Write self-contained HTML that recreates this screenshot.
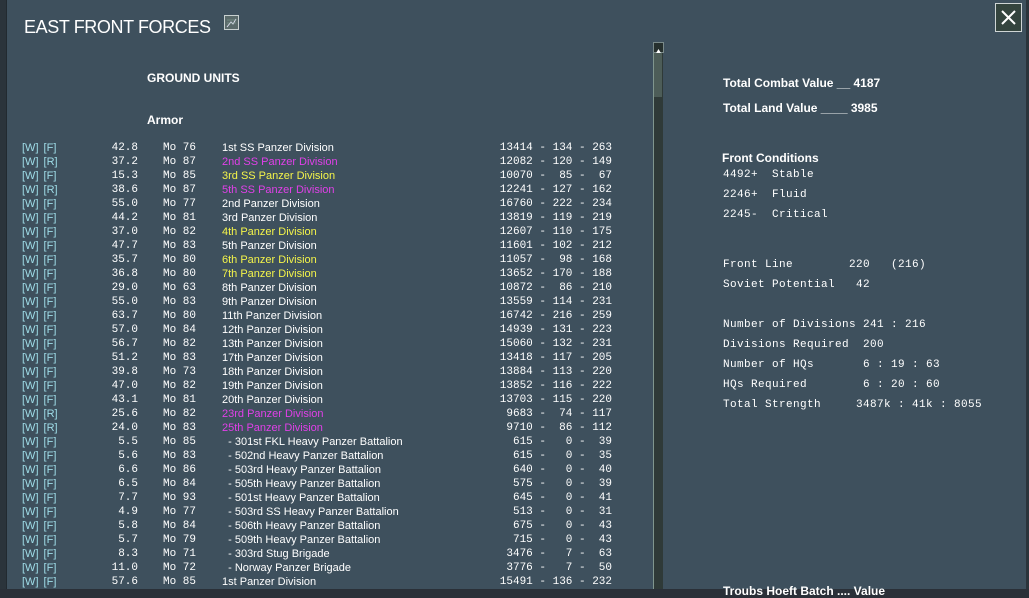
<!DOCTYPE html>
<html><head><meta charset="utf-8"><style>
html,body{margin:0;width:1029px;height:589px;overflow:hidden;background:#2a3038;font-family:"Liberation Sans",sans-serif;}
#win{position:absolute;left:0;top:0;width:1029px;height:589px;background:#3e505d;}
#edgeL{position:absolute;left:0;top:0;width:6px;height:589px;background:#2b343b;border-right:1px solid #222a30}
#edgeR{position:absolute;right:0;top:0;width:3px;height:589px;background:#2b343b}
.t{position:absolute;color:#fff;white-space:pre;}
h1{position:absolute;left:24px;top:17px;margin:0;font-size:18px;font-weight:normal;color:#fff;letter-spacing:-0.4px;}
.r{position:absolute;left:0;height:14px;line-height:14px;font-size:11px;white-space:pre;width:650px;}
.r span{position:absolute;top:0}
.wf{left:22px;color:#9fdde8;font-family:"Liberation Sans",sans-serif;word-spacing:2px}
.v{right:512px;color:#fff;font-family:"Liberation Mono",monospace;text-align:right}
.mo{left:163px;color:#fff;font-family:"Liberation Mono",monospace;}
.n{left:222px;color:#fff;}
.m .n{color:#e040e8}.y .n{color:#f4f44a}
.s{right:38px;color:#fff;font-family:"Liberation Mono",monospace;text-align:right}
.mono{font-family:"Liberation Mono",monospace;font-size:11px;color:#fff;position:absolute;white-space:pre;letter-spacing:0.4px}
</style></head><body>
<div id="win">
<div id="edgeL"></div><div id="edgeR"></div>
<h1>EAST FRONT FORCES</h1>
<div style="position:absolute;left:224px;top:15px;width:13px;height:13px;border:1px solid #c8d0d0;background:#5a6a6a"><svg width="13" height="13"><path d="M2 11 L6 6 L8 8 L11 3" stroke="#dde" fill="none"/><path d="M2 4h9M2 7h9" stroke="#8a9" stroke-width=".6"/></svg></div>
<div style="position:absolute;left:995px;top:3px;width:27px;height:29px;border:1px solid #cfd5d5;background:#34443e;box-sizing:border-box"><svg width="25" height="27"><path d="M6 7 L19 20 M19 7 L6 20" stroke="#fff" stroke-width="2"/></svg></div>
<div class="t" style="left:147px;top:71px;font-size:12px;font-weight:bold">GROUND UNITS</div>
<div class="t" style="left:147px;top:113px;font-size:12px;font-weight:bold">Armor</div>
<div style="position:absolute;left:653px;top:42px;width:9px;height:9px;background:#26302e;border:1px solid #7a8a8a"><svg width="9" height="9"><path d="M1.5 7 L4.5 2 L7.5 7Z" fill="#fff"/></svg></div>
<div style="position:absolute;left:653px;top:53px;width:9px;height:536px;background:#2f3a38;border-left:1px solid #80968e"></div>
<div style="position:absolute;left:654px;top:53px;width:8px;height:44px;background:#4d5d58"></div>
<div id="rows" style="position:absolute;left:0;top:141px">
<div class="r" style="top:0"><span class="wf">[W] [F]</span><span class="v">42.8</span><span class="mo">Mo 76</span><span class="n">1st SS Panzer Division</span><span class="s">13414 - 134 - 263</span></div>
<div class="r m" style="top:14px"><span class="wf">[W] [R]</span><span class="v">37.2</span><span class="mo">Mo 87</span><span class="n">2nd SS Panzer Division</span><span class="s">12082 - 120 - 149</span></div>
<div class="r y" style="top:28px"><span class="wf">[W] [F]</span><span class="v">15.3</span><span class="mo">Mo 85</span><span class="n">3rd SS Panzer Division</span><span class="s">10070 -  85 -  67</span></div>
<div class="r m" style="top:42px"><span class="wf">[W] [R]</span><span class="v">38.6</span><span class="mo">Mo 87</span><span class="n">5th SS Panzer Division</span><span class="s">12241 - 127 - 162</span></div>
<div class="r" style="top:56px"><span class="wf">[W] [F]</span><span class="v">55.0</span><span class="mo">Mo 77</span><span class="n">2nd Panzer Division</span><span class="s">16760 - 222 - 234</span></div>
<div class="r" style="top:70px"><span class="wf">[W] [F]</span><span class="v">44.2</span><span class="mo">Mo 81</span><span class="n">3rd Panzer Division</span><span class="s">13819 - 119 - 219</span></div>
<div class="r y" style="top:84px"><span class="wf">[W] [F]</span><span class="v">37.0</span><span class="mo">Mo 82</span><span class="n">4th Panzer Division</span><span class="s">12607 - 110 - 175</span></div>
<div class="r" style="top:98px"><span class="wf">[W] [F]</span><span class="v">47.7</span><span class="mo">Mo 83</span><span class="n">5th Panzer Division</span><span class="s">11601 - 102 - 212</span></div>
<div class="r y" style="top:112px"><span class="wf">[W] [F]</span><span class="v">35.7</span><span class="mo">Mo 80</span><span class="n">6th Panzer Division</span><span class="s">11057 -  98 - 168</span></div>
<div class="r y" style="top:126px"><span class="wf">[W] [F]</span><span class="v">36.8</span><span class="mo">Mo 80</span><span class="n">7th Panzer Division</span><span class="s">13652 - 170 - 188</span></div>
<div class="r" style="top:140px"><span class="wf">[W] [F]</span><span class="v">29.0</span><span class="mo">Mo 63</span><span class="n">8th Panzer Division</span><span class="s">10872 -  86 - 210</span></div>
<div class="r" style="top:154px"><span class="wf">[W] [F]</span><span class="v">55.0</span><span class="mo">Mo 83</span><span class="n">9th Panzer Division</span><span class="s">13559 - 114 - 231</span></div>
<div class="r" style="top:168px"><span class="wf">[W] [F]</span><span class="v">63.7</span><span class="mo">Mo 80</span><span class="n">11th Panzer Division</span><span class="s">16742 - 216 - 259</span></div>
<div class="r" style="top:182px"><span class="wf">[W] [F]</span><span class="v">57.0</span><span class="mo">Mo 84</span><span class="n">12th Panzer Division</span><span class="s">14939 - 131 - 223</span></div>
<div class="r" style="top:196px"><span class="wf">[W] [F]</span><span class="v">56.7</span><span class="mo">Mo 82</span><span class="n">13th Panzer Division</span><span class="s">15060 - 132 - 231</span></div>
<div class="r" style="top:210px"><span class="wf">[W] [F]</span><span class="v">51.2</span><span class="mo">Mo 83</span><span class="n">17th Panzer Division</span><span class="s">13418 - 117 - 205</span></div>
<div class="r" style="top:224px"><span class="wf">[W] [F]</span><span class="v">39.8</span><span class="mo">Mo 73</span><span class="n">18th Panzer Division</span><span class="s">13884 - 113 - 220</span></div>
<div class="r" style="top:238px"><span class="wf">[W] [F]</span><span class="v">47.0</span><span class="mo">Mo 82</span><span class="n">19th Panzer Division</span><span class="s">13852 - 116 - 222</span></div>
<div class="r" style="top:252px"><span class="wf">[W] [F]</span><span class="v">43.1</span><span class="mo">Mo 81</span><span class="n">20th Panzer Division</span><span class="s">13703 - 115 - 220</span></div>
<div class="r m" style="top:266px"><span class="wf">[W] [R]</span><span class="v">25.6</span><span class="mo">Mo 82</span><span class="n">23rd Panzer Division</span><span class="s">9683 -  74 - 117</span></div>
<div class="r m" style="top:280px"><span class="wf">[W] [R]</span><span class="v">24.0</span><span class="mo">Mo 83</span><span class="n">25th Panzer Division</span><span class="s">9710 -  86 - 112</span></div>
<div class="r" style="top:294px"><span class="wf">[W] [F]</span><span class="v">5.5</span><span class="mo">Mo 85</span><span class="n">  - 301st FKL Heavy Panzer Battalion</span><span class="s">615 -   0 -  39</span></div>
<div class="r" style="top:308px"><span class="wf">[W] [F]</span><span class="v">5.6</span><span class="mo">Mo 83</span><span class="n">  - 502nd Heavy Panzer Battalion</span><span class="s">615 -   0 -  35</span></div>
<div class="r" style="top:322px"><span class="wf">[W] [F]</span><span class="v">6.6</span><span class="mo">Mo 86</span><span class="n">  - 503rd Heavy Panzer Battalion</span><span class="s">640 -   0 -  40</span></div>
<div class="r" style="top:336px"><span class="wf">[W] [F]</span><span class="v">6.5</span><span class="mo">Mo 84</span><span class="n">  - 505th Heavy Panzer Battalion</span><span class="s">575 -   0 -  39</span></div>
<div class="r" style="top:350px"><span class="wf">[W] [F]</span><span class="v">7.7</span><span class="mo">Mo 93</span><span class="n">  - 501st Heavy Panzer Battalion</span><span class="s">645 -   0 -  41</span></div>
<div class="r" style="top:364px"><span class="wf">[W] [F]</span><span class="v">4.9</span><span class="mo">Mo 77</span><span class="n">  - 503rd SS Heavy Panzer Battalion</span><span class="s">513 -   0 -  31</span></div>
<div class="r" style="top:378px"><span class="wf">[W] [F]</span><span class="v">5.8</span><span class="mo">Mo 84</span><span class="n">  - 506th Heavy Panzer Battalion</span><span class="s">675 -   0 -  43</span></div>
<div class="r" style="top:392px"><span class="wf">[W] [F]</span><span class="v">5.7</span><span class="mo">Mo 79</span><span class="n">  - 509th Heavy Panzer Battalion</span><span class="s">715 -   0 -  43</span></div>
<div class="r" style="top:406px"><span class="wf">[W] [F]</span><span class="v">8.3</span><span class="mo">Mo 71</span><span class="n">  - 303rd Stug Brigade</span><span class="s">3476 -   7 -  63</span></div>
<div class="r" style="top:420px"><span class="wf">[W] [F]</span><span class="v">11.0</span><span class="mo">Mo 72</span><span class="n">  - Norway Panzer Brigade</span><span class="s">3776 -   7 -  50</span></div>
<div class="r" style="top:434px"><span class="wf">[W] [F]</span><span class="v">57.6</span><span class="mo">Mo 85</span><span class="n">1st Panzer Division</span><span class="s">15491 - 136 - 232</span></div>
</div>
<div class="t" style="left:723px;top:76px;font-size:12px;font-weight:bold">Total Combat Value __ 4187</div>
<div class="t" style="left:723px;top:101px;font-size:12px;font-weight:bold">Total Land Value ____ 3985</div>
<div class="t" style="left:722px;top:151px;font-size:12px;font-weight:bold">Front Conditions</div>
<div class="mono" style="left:723px;top:169px">4492+  Stable</div>
<div class="mono" style="left:723px;top:189px">2246+  Fluid</div>
<div class="mono" style="left:723px;top:209px">2245-  Critical</div>
<div class="mono" style="left:723px;top:259px">Front Line        220   (216)</div>
<div class="mono" style="left:723px;top:279px">Soviet Potential   42</div>
<div class="mono" style="left:723px;top:319px">Number of Divisions 241 : 216</div>
<div class="mono" style="left:723px;top:339px">Divisions Required  200</div>
<div class="mono" style="left:723px;top:359px">Number of HQs       6 : 19 : 63</div>
<div class="mono" style="left:723px;top:379px">HQs Required        6 : 20 : 60</div>
<div class="mono" style="left:723px;top:399px">Total Strength     3487k : 41k : 8055</div>
<div class="t" style="left:723px;top:584px;font-size:12px;font-weight:bold">Troubs Hoeft Batch .... Value</div>
</div>
</body></html>
